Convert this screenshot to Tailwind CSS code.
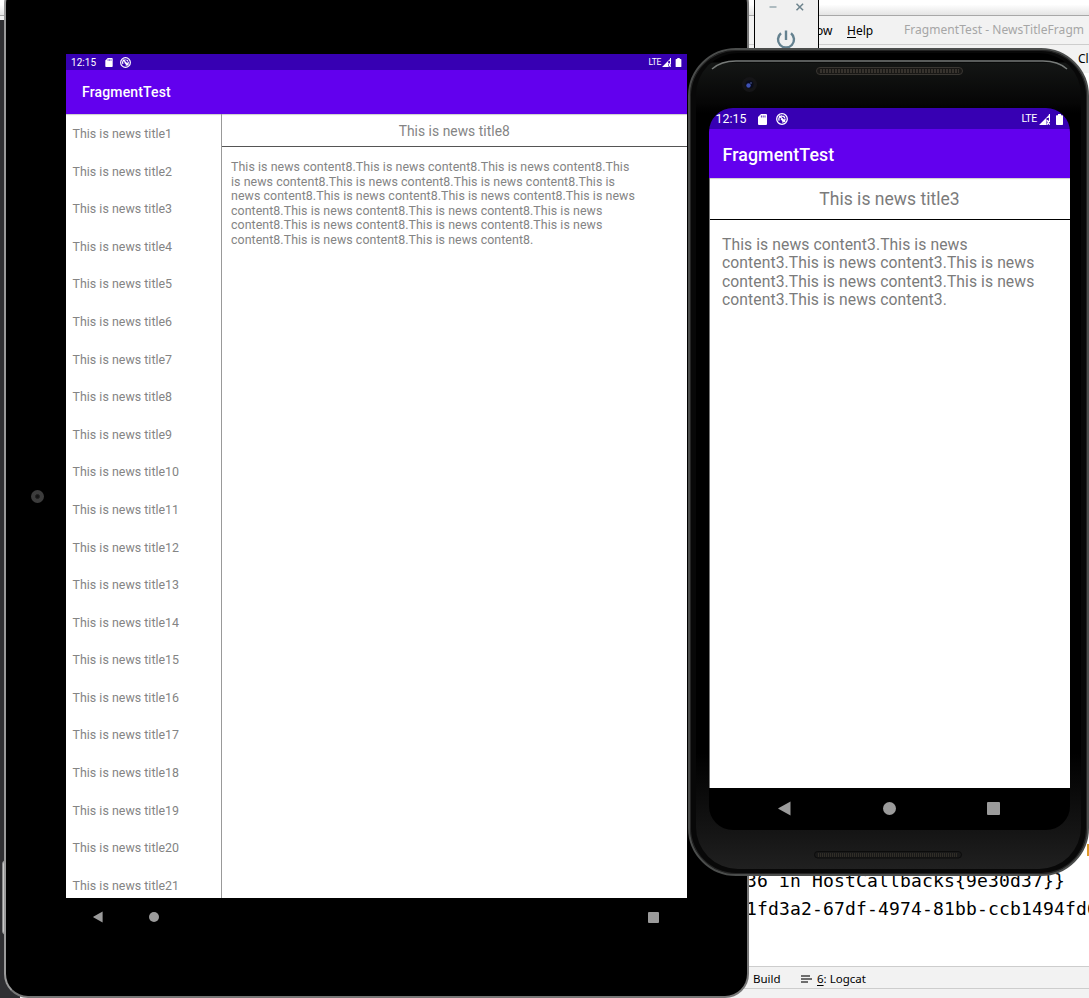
<!DOCTYPE html>
<html lang="en">
<head>
<meta charset="utf-8">
<title>FragmentTest</title>
<script src="https://cdn.jsdelivr.net/npm/@tailwindcss/browser@4"></script>
</head>
<body class="relative w-[1089px] h-[998px] overflow-hidden bg-white font-['Roboto',sans-serif]">
<svg width="0" height="0" class="absolute">
  <symbol id="sd" viewBox="0 0 9 11"><path fill="#fff" d="M3 0h5q1 0 1 1v9q0 1-1 1H1q-1 0-1-1V3z"/><path stroke="#3700b3" stroke-width=".8" d="M3.4 1.5v2M5.2 1.5v2M7 1.5v2"/></symbol>
  <symbol id="sync" viewBox="0 0 12 12"><g fill="none" stroke="#fff"><circle cx="6" cy="6" r="5.3" stroke-width="1.3"/><path stroke-width="1.3" d="M3.2 7.6A3.1 3.1 0 0 1 6 3a3 3 0 0 1 2.8 1.9M9 5.5A3.1 3.1 0 0 1 6.2 9M3.2 2.8l6 6M5 5.8l2 2"/></g></symbol>
  <symbol id="signal" viewBox="0 0 11 11"><path fill="#fff" d="M0 11 11 0v4H7.500v7z"/><path fill="none" stroke="#fff" stroke-width="1.3" d="m8 6 2.700 4.700M10.700 6 8 10.700M10.500 0v8"/><path fill="#3700b3" d="m7.600 5.200 2-2v2z"/></symbol>
  <symbol id="battery" viewBox="0 0 7 11"><path fill="#fff" d="M2 0h3v1.300h1.300q.7 0 .7.7v8.300q0 .7-.7.7H.7q-.7 0-.7-.7V2q0-.7.7-.7H2z"/></symbol>
  <symbol id="back" viewBox="0 0 13 15"><path fill="#9b9b9b" d="M12.500.5v14L.3 7.800v-.6z"/></symbol>
</svg>

<!-- IDE window behind the emulators -->
<div class="w-full h-full flex flex-col font-['Noto_Sans',sans-serif] text-[12px] text-black">
  <div class="h-[16px] shrink-0 border-b border-[#a8a8a8] bg-linear-to-b from-white from-30% to-[#e4e4e4]"></div>
  <div class="h-[29px] shrink-0 bg-[#f2f2f2] border-b border-[#cdcdcd] flex items-center whitespace-nowrap pl-[787px]">
    <span class="w-[60px] shrink-0 pt-[2px]">Window</span>
    <span class="w-[57px] shrink-0 pt-[2px]"><u class="underline-offset-2">H</u>elp</span>
    <span class="text-[#a6a6a6] tracking-[0.05px]">FragmentTest - NewsTitleFragm</span>
  </div>
  <div class="h-[28px] shrink-0 bg-[#f2f2f2] flex items-center pl-[1078px] whitespace-nowrap text-[12px]">Cl</div>
  <div class="flex-1 flex flex-col justify-end font-['DejaVu_Sans_Mono',monospace] text-[18px] leading-[28px] tracking-[0.16px] whitespace-pre pb-[43px] pl-[746px]">
    <div>36 in HostCallbacks{9e30d37}}</div>
    <div>1fd3a2-67df-4974-81bb-ccb1494fd6</div>
  </div>
  <div class="h-[23px] shrink-0 bg-[#f2f2f2] border-y border-[#cdcdcd] flex items-center pl-[753px] pt-[2px] text-[11.5px]">
    <span class="w-[48px]">Build</span>
    <svg class="mr-[5px]" width="11" height="8" viewBox="0 0 11 8"><path stroke="#6e6e6e" stroke-width="1.8" d="M0 1h9M0 4h11M0 7h7"/></svg>
    <span><u class="underline-offset-2">6</u>: Logcat</span>
  </div>
  <div class="h-[9px] shrink-0 bg-[#f2f2f2]"></div>
</div>
<div class="absolute left-0 top-[20px] w-[20px] bottom-0 bg-[#2f2f32]"></div>
<div class="absolute left-[2px] top-[860px] w-[5px] h-[75px] rounded-l bg-[#c9c9c9] border border-[#8a8a8a]"></div>
<div class="absolute left-[1087px] top-[844px] w-[2px] h-[12px] bg-[#e09a28]"></div>

<!-- Emulator toolbar -->
<div class="absolute left-[754px] top-0 w-[65px] h-[60px] bg-[#f0f0f0] border-x border-black flex flex-col">
  <svg width="63" height="52" viewBox="755 0 63 52" fill="none"><path stroke="#9eaeb5" stroke-width="1.6" d="M769.500 7h7"/><path stroke="#6d838d" stroke-width="1.5" d="m796.500 3.700 6.600 6.600M803.100 3.700l-6.600 6.600"/><path stroke="#64818f" stroke-width="2.4" d="M786 30.500v9.500M781 33.300a8 8 0 1 0 10 0"/></svg>
</div>

<!-- Tablet -->
<div class="absolute left-[4px] top-[-20px] w-[745px] h-[1018px] rounded-[24px] bg-black border-[2.5px] border-[#777] border-l-[#999] flex items-center">
  <div class="w-[60px] shrink-0 flex justify-center"><div class="size-[13px] mt-[15px] mr-[-2px] rounded-full bg-[#3c3c3c] flex items-center justify-center"><div class="size-[5px] rounded-full bg-[#141414] border border-[#202020]"></div></div></div>
  <div class="w-[621px] self-start mt-[72px] shrink-0">
    <div class="h-[16px] bg-[#3700b3] flex items-center text-white text-[10px] pl-[5px] pr-[5px]">
      <span class="w-[34px] tracking-[0.05px]">12:15</span>
      <svg width="8" height="9" class="mr-[7px]"><use href="#sd"/></svg>
      <svg width="11" height="11"><use href="#sync"/></svg>
      <span class="ml-auto text-[8.5px] mr-[1px] tracking-[-0.3px]">LTE</span>
      <svg width="9" height="9" class="mr-[4px]"><use href="#signal"/></svg>
      <svg width="7" height="9"><use href="#battery"/></svg>
    </div>
    <div class="h-[44px] bg-[#6200ee] flex items-center pl-[16px] pt-px text-white font-medium text-[14px] tracking-[0.15px]">FragmentTest</div>
    <div class="h-[784px] bg-white flex text-[#848484] shadow-[inset_0_2px_1px_-1px_#ccc]">
      <div class="w-[155.5px] shrink-0 border-r border-[#999] overflow-hidden text-[12.4px] tracking-[0.03px] pl-[6.5px] whitespace-nowrap">
        <div id="titles" class="pt-[1.5px]"></div>
      </div>
      <div class="flex-1">
        <div class="h-[33px] border-b border-[#555] flex items-center justify-center pt-[3px] text-[13.8px] tracking-[0.05px]">This is news title8</div>
        <div class="pt-[13px] pl-[9.5px] text-[12.4px] leading-[14.5px] tracking-[0.06px] whitespace-nowrap">This is news content8.This is news content8.This is news content8.This<br>is news content8.This is news content8.This is news content8.This is<br>news content8.This is news content8.This is news content8.This is news<br>content8.This is news content8.This is news content8.This is news<br>content8.This is news content8.This is news content8.This is news<br>content8.This is news content8.This is news content8.</div>
      </div>
    </div>
    <div class="h-[38px] flex items-center pl-[27px] pr-[28px]">
      <svg width="10" height="12"><use href="#back"/></svg>
      <div class="size-[10px] rounded-full bg-[#9b9b9b] ml-[46px]"></div>
      <div class="size-[11px] bg-[#9b9b9b] ml-auto rounded-[1px]"></div>
    </div>
  </div>
</div>

<!-- Phone -->
<div class="absolute left-[688px] top-[48px] w-[401px] h-[828px] rounded-[48px] bg-[#080808] border-2 border-[#4b4d4c] shadow-[inset_0_0_0_1px_#242424]">
  <div class="mx-[6px] mt-[3px] h-[816px] rounded-[42px] overflow-hidden bg-[linear-gradient(#000_0,#000_9px,#141615_10px,#060606_50px,#000_60px,#000_700px,#151515_780px,#202020_816px)] flex flex-col items-center">
    <svg class="shrink-0" width="385" height="55" viewBox="696 53 385 55">
      <path fill="none" stroke="#777b79" stroke-width="1.500" d="M712 69q9-8 24-8h307q15 0 24 8"/>
      <rect x="816.500" y="67.500" width="146" height="7" rx="3.500" fill="#191816" stroke="#3a3733"/>
      <path stroke="#37332e" stroke-width="4" stroke-dasharray="2 1" d="M820 71h139"/>
      <circle cx="749.500" cy="84.500" r="7.500" fill="#151517"/><circle cx="749.500" cy="84.500" r="4" fill="#080b1c"/><circle cx="748.500" cy="85.500" r="2.200" fill="#3f52b5"/><circle cx="751" cy="83" r="1" fill="#34406f"/>
    </svg>
    <div class="w-[361px] h-[722px] shrink-0 rounded-[24px] overflow-hidden bg-black ml-[2px]">
      <div class="h-[21px] bg-[#3700b3] flex items-center text-white text-[12.3px] pl-[6.5px] pr-[7px] pt-px">
        <span class="w-[42.5px] tracking-[0.1px]">12:15</span>
        <svg width="9" height="11" class="mr-[9px]"><use href="#sd"/></svg>
        <svg width="12" height="12"><use href="#sync"/></svg>
        <span class="ml-auto text-[10.5px] mr-[2px] tracking-[-0.3px]">LTE</span>
        <svg width="11" height="11" class="mr-[6px]"><use href="#signal"/></svg>
        <svg width="7" height="11"><use href="#battery"/></svg>
      </div>
      <div class="h-[49px] bg-[#6200ee] flex items-center pl-[13.500px] pt-[3px] text-white font-medium text-[17.800px] tracking-[0.1px]">FragmentTest</div>
      <div class="h-[610px] bg-white text-[#7b7b7b] border-l border-[#777] shadow-[inset_0_2px_1px_-1px_#ccc]">
        <div class="h-[42px] border-b border-black flex items-center justify-center pt-[2px] pr-px text-[17.500px] tracking-[0.03px]">This is news title3</div>
        <div class="pt-[16px] pl-[12px] text-[15.700px] leading-[18.300px] tracking-[0.08px] whitespace-nowrap">This is news content3.This is news<br>content3.This is news content3.This is news<br>content3.This is news content3.This is news<br>content3.This is news content3.</div>
      </div>
      <div class="h-[42px] flex items-center justify-between pl-[69px] pr-[70px] pb-px">
        <svg width="13" height="15"><use href="#back"/></svg>
        <div class="size-[13px] rounded-full bg-[#9b9b9b]"></div>
        <div class="size-[13px] bg-[#9b9b9b] rounded-[1px]"></div>
      </div>
    </div>
    <svg class="mt-[21px] shrink-0" width="149" height="8"><rect x=".5" y=".5" width="147" height="6.500" rx="3.200" fill="#191919" stroke="#0c0c0c"/><path stroke="#302d27" stroke-width="4" stroke-dasharray="1 1" d="M4 4h140"/></svg>
  </div>
</div>

<script>
document.getElementById('titles').innerHTML = Array.from({length: 21}, (_, i) =>
  '<div class="h-[37.6px] flex items-center">This is news title' + (i + 1) + '</div>').join('');
</script>
</body>
</html>
